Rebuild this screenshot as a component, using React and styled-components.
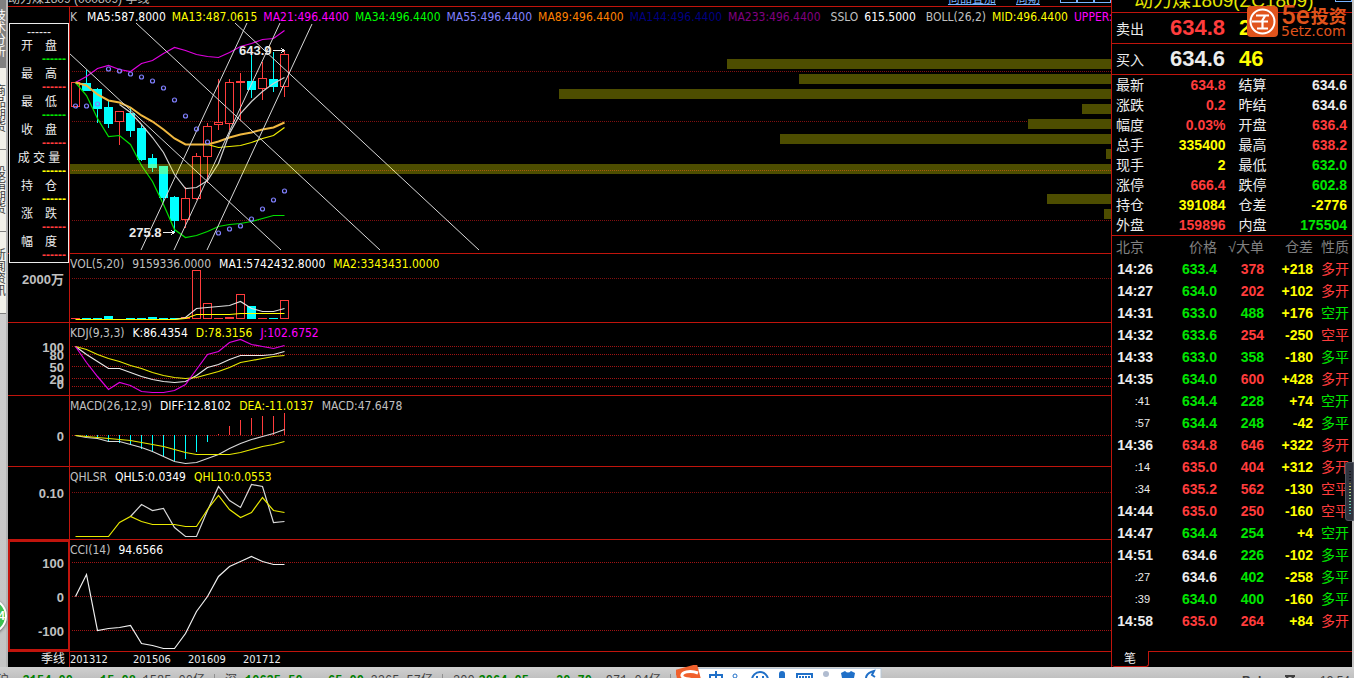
import React, { useState } from 'react';
import styled, { createGlobalStyle } from 'styled-components';

const RED = '#c0140c';
const UP = '#ff3c3c';
const DOWN = '#00e600';
const CYAN = '#00ffff';
const YELLOW = '#ffff00';
const WHITE = '#ececec';
const MAGENTA = '#ff00ff';
const GREY = '#c0c0c0';

const GlobalStyle = createGlobalStyle`
  * {
    box-sizing: border-box;
  }
  body {
    margin: 0;
    background: #c4c4c4;
    font-family: 'Liberation Sans', 'Noto Sans CJK SC', sans-serif;
  }
  button {
    font: inherit;
    padding: 0;
    margin: 0;
  }
`;

const Page = styled.div`
  display: flex;
  flex-direction: column;
  height: 100vh;
  overflow: hidden;
  position: relative;
`;

const Main = styled.div`
  display: flex;
  flex: 1 0 auto;
  padding-right: 2px;
`;

const SideTabs = styled.nav`
  width: 8px;
  overflow: hidden;
  background: linear-gradient(#d8d8d8, #c4c4c4);
  border-right: 2px solid #b4b4b4;
  flex: none;
`;

const SideTab = styled.button`
  display: flex;
  align-items: center;
  justify-content: flex-end;
  width: 100%;
  height: ${(props) => (props.$active ? 68 : 82)}px;
  border: none;
  border-bottom: 1px solid #808080;
  background: ${(props) => (props.$active ? '#808080' : '#f2f1ea')};
  color: ${(props) => (props.$active ? '#fff' : '#404040')};
  font-size: 12px;
  line-height: 12px;
`;

const SideText = styled.span`
  width: 12px;
  flex: none;
  word-break: break-all;
`;

const Charts = styled.div`
  position: relative;
  display: flex;
  flex-direction: column;
  flex: 1;
  min-width: 0;
  background: #000;
`;

const TitleBar = styled.div`
  display: flex;
  align-items: flex-end;
  justify-content: space-between;
  height: 7px;
  overflow: hidden;
  border-bottom: 1px solid ${RED};
  color: ${GREY};
  font-size: 12px;
  line-height: 14px;
  white-space: nowrap;
`;

const TitleTools = styled.div`
  display: flex;
  align-items: flex-end;
`;

const ToolLink = styled.a`
  color: #78b4ff;
  margin-right: 20px;
`;

const ToolButton = styled.button`
  width: 17px;
  height: 14px;
  margin-bottom: ${(props) => (props.$raised ? 10 : 3)}px;
  background: #000;
  border: 1px solid #78b4ff;
`;

const Panel = styled.section`
  display: flex;
  height: ${(props) => props.$height}px;
  border-bottom: 1px solid ${RED};
`;

const Axis = styled.div`
  width: 62px;
  flex: none;
  border-right: 1px solid ${RED};
  outline: ${(props) => (props.$selected ? `2px solid ${RED}` : 'none')};
  outline-offset: -2px;
`;

const Plot = styled.div`
  flex: 1;
  min-width: 0;
  overflow: hidden;
`;

const Legend = styled.div`
  display: flex;
  gap: ${(props) => (props.$dense ? 6 : 8)}px;
  height: 20px;
  line-height: 20px;
  font-family: 'DejaVu Sans Condensed', 'DejaVu Sans', sans-serif;
  font-size: 12px;
  white-space: nowrap;
`;

const LegendItem = styled.span`
  color: ${(props) => props.color};
  padding-right: ${(props) => (props.$wide ? 4 : 0)}px;
`;

const Canvas = styled.svg`
  display: block;
  width: 100%;
  height: ${(props) => props.$height}px;
  overflow: visible;
  shape-rendering: crispEdges;
`;

const AxisText = styled.text`
  fill: ${GREY};
  font-family: 'Liberation Sans', 'Noto Sans CJK SC', sans-serif;
  font-size: 13px;
  font-weight: bold;
  text-anchor: end;
`;

const Mark = styled.text`
  fill: ${WHITE};
  font-family: 'Liberation Sans', sans-serif;
  font-size: 13px;
  font-weight: bold;
`;

const DateRow = styled.div`
  display: flex;
  flex: 1;
  font-family: 'DejaVu Sans Condensed', 'Noto Sans CJK SC', sans-serif;
  font-size: 11px;
  line-height: 15px;
  color: ${WHITE};
`;

const Period = styled.div`
  width: 62px;
  flex: none;
  padding-right: 4px;
  text-align: right;
  font-size: 12px;
  border-right: 1px solid ${RED};
`;

const DateCell = styled.div`
  width: ${(props) => props.$width}px;
`;

const InfoBox = styled.div`
  position: absolute;
  left: 1px;
  top: 23px;
  width: 60px;
  height: 240px;
  background: #000;
  border: 1px solid ${WHITE};
  color: ${WHITE};
  font-size: 12px;
  text-align: center;
`;

const InfoHead = styled.div`
  height: 12px;
  line-height: 16px;
`;

const InfoLabel = styled.div`
  height: 18px;
  line-height: 20px;
`;

const InfoValue = styled.div`
  height: 10px;
  line-height: 10px;
  padding-right: 2px;
  text-align: right;
  font-weight: bold;
  color: ${(props) => props.color};
`;

const Quote = styled.aside`
  display: flex;
  flex-direction: column;
  width: 241px;
  flex: none;
  background: #000;
  border-left: 1px solid ${RED};
  color: ${WHITE};
  font-size: 14px;
`;

const QuoteTitle = styled.div`
  display: flex;
  align-items: flex-end;
  justify-content: space-between;
  height: 13px;
  overflow: hidden;
  border-bottom: 1px solid ${RED};
  padding-left: 22px;
  color: #e6e600;
  font-size: 19px;
  line-height: 22px;
  white-space: nowrap;
`;

const BidRow = styled.div`
  display: grid;
  grid-template-columns: 49px 60px 1fr;
  align-items: center;
  height: 31px;
  padding-left: 4px;
  border-bottom: 1px solid ${RED};
`;

const BidPrice = styled.span`
  color: ${(props) => props.color};
  font-size: 22px;
  font-weight: bold;
  text-align: right;
`;

const BidSize = styled.span`
  color: ${YELLOW};
  font-size: 22px;
  font-weight: bold;
  padding-left: 14px;
`;

const Table = styled.table`
  table-layout: fixed;
  width: 100%;
  border-collapse: collapse;
  border-bottom: ${(props) => (props.$ruled ? `1px solid ${RED}` : 'none')};
`;

const Row = styled.tr`
  height: ${(props) => props.$height}px;
`;

const Head = styled.th`
  width: ${(props) => props.$width}px;
  padding: 0;
  font-weight: normal;
  text-align: ${(props) => props.$align || 'right'};
  padding-left: ${(props) => props.$pad || 0}px;
  line-height: 20px;
  color: ${(props) => (props.$dim ? '#808080' : WHITE)};
  white-space: nowrap;
`;

const Cell = styled.td`
  padding: 0;
  padding-left: ${(props) => props.$pad || 0}px;
  padding-right: ${(props) => props.$end || 0}px;
  font-weight: ${(props) => (props.$plain ? 'normal' : 'bold')};
  font-size: ${(props) => (props.$small ? 11 : 14)}px;
  line-height: 20px;
  text-align: ${(props) => props.$align || 'right'};
  color: ${(props) => props.color};
  white-space: nowrap;
`;

const TabRow = styled.div`
  display: flex;
  height: 16px;
  margin-top: auto;
`;

const TickTab = styled.button`
  width: 37px;
  height: 16px;
  background: #000;
  color: ${WHITE};
  border: 1px solid ${RED};
  border-top: none;
  border-left: none;
  border-radius: 0 0 3px 3px;
  font-size: 12px;
  line-height: 14px;
`;

const TabRule = styled.div`
  flex: 1;
  border-top: 1px solid ${RED};
`;

const Status = styled.footer`
  display: flex;
  align-items: center;
  flex: none;
  height: 28px;
  padding-right: 4px;
  margin-left: -13px;
  background: linear-gradient(#d0d0d0, #a8a8a8);
  font-family: 'Liberation Mono', 'Noto Sans CJK SC', monospace;
  font-size: 12px;
  color: #404040;
  white-space: pre;
`;

const IndexGroup = styled.div`
  display: grid;
  grid-template-columns: 20px 56px 63px 69px;
  width: 228px;
  flex: none;
  padding-left: 10px;
  border-right: 1px solid #909090;
  line-height: 14px;
  text-align: right;
`;

const IndexName = styled.span`
  text-align: left;
`;

const Fall = styled.b`
  color: #008000;
`;

const StatusRight = styled.div`
  display: flex;
  align-items: center;
  gap: 12px;
  margin-left: auto;
  font-family: 'Liberation Sans', sans-serif;
`;

const Watermark = styled.div`
  position: absolute;
  right: 6px;
  top: 6px;
  display: flex;
  gap: 3px;
  color: #e0541c;
`;

const Brand = styled.div`
  width: 67px;
  white-space: nowrap;
`;

const BrandName = styled.div`
  display: flex;
  align-items: center;
  height: 18px;
  font-family: Roboto, 'Noto Sans CJK SC', sans-serif;
  font-size: 18px;
  font-weight: bold;
`;

const BrandBig = styled.span`
  font-size: 26px;
  font-weight: 500;
  margin-right: 1px;
`;

const BrandSite = styled.div`
  font-family: 'DejaVu Sans', sans-serif;
  font-size: 14px;
  line-height: 15px;
`;

const Meter = styled.div`
  position: absolute;
  right: 0;
  top: 462px;
  width: 9px;
  height: 59px;
  padding: 8px 2px 6px 3px;
  background: #30343f;
  border: 1px solid #50545f;
  border-radius: 3px 0 0 3px;
`;

const MeterBars = styled.div`
  height: 100%;
  background: repeating-linear-gradient(transparent 0 1px, #30343f 1px 3px),
    linear-gradient(#15171c 0 28%, #d8c860 30%, #60d0b0 80%, #50b0c0);
`;

const Ball = styled.div`
  position: absolute;
  left: -29px;
  top: 598px;
  width: 36px;
  height: 36px;
  border: 2px solid #fff;
  border-radius: 50%;
  background: #3cc050;
  box-shadow: 0 1px 3px #606060;
  color: #fff;
  font-size: 12px;
  font-weight: bold;
  line-height: 32px;
  text-align: right;
`;

const Ime = styled.div`
  position: absolute;
  left: 676px;
  top: 665px;
`;

// one slot is 11px wide, the first bar stands 5px from the axis
const slot = (i) => 5 + i * 11;

// [bodyTop, bodyBottom, high, low, rising]
const candles = [
  [82, 106, 82, 106, 1],
  [83, 90, 70, 91, 0],
  [89, 108, 88, 123, 0],
  [107, 123, 100, 128, 0],
  [111, 121, 111, 145, 1],
  [113, 130, 108, 137, 0],
  [128, 159, 125, 161, 0],
  [158, 167, 154, 172, 0],
  [166, 197, 166, 202, 0],
  [197, 220, 196, 232, 0],
  [198, 219, 187, 228, 1],
  [156, 198, 153, 200, 1],
  [126, 156, 123, 183, 1],
  [122, 124, 79, 130, 1],
  [82, 123, 79, 130, 1],
  [81, 82, 73, 120, 1],
  [81, 89, 51, 98, 0],
  [78, 88, 62, 100, 1],
  [79, 86, 52, 92, 0],
  [54, 86, 50, 97, 1],
];

const upper = [82, 76, 68, 65, 69, 71, 63, 60, 53, 47, 50, 54, 56, 57, 52, 46, 43, 39, 38, 30];
const middle = [82, 85, 94, 100, 102, 107, 115, 121, 129, 138, 144, 144, 144, 141, 137, 134, 132, 129, 127, 122];
const lower = [82, 95, 118, 136, 135, 144, 165, 181, 204, 229, 237, 235, 231, 226, 224, 223, 221, 218, 215, 215];
const ma13 = [144, 147, 146, 145, 142, 138, 135, 127];
const ma5 = [104, 112, 124, 137, 152, 174, 188, 187, 180, 163, 133, 113, 101, 91, 83, 77];
const sar = [106, 106, 104, 69, 71, 74, 77, 81, 88, 100, 116, 129, 142, 233, 229, 226, 219, 209, 200, 191];

const trends = [
  [-1, 53, 211, 250],
  [66, 23, 310, 250],
  [165, 23, 409, 250],
  [71, 250, 177, 23],
  [104, 250, 210, 23],
  [137, 250, 242, 24],
];

// [top, width]
const profile = [
  [59, 384],
  [74, 312],
  [89, 552],
  [104, 29],
  [119, 83],
  [134, 331],
  [149, 5],
  [194, 64],
  [209, 7],
];

const volumes = [318, 318, 318, 316, 319, 318, 318, 317, 318, 318, 317, 270, 303, 318, 317, 294, 306, 318, 318, 300];
const volMa5 = [319, 319, 319, 319, 319, 319, 317, 308, 307, 306, 305, 301, 308, 311, 311, 308];
const volMa20 = [319, 319, 319, 319, 319, 319, 319, 319, 319, 319, 318, 314, 314, 314, 314, 313, 313, 313, 313, 313];

const kLine = [346, 354, 361, 368, 368, 372, 376, 379, 381, 382, 381, 375, 367, 364, 359, 355, 355, 355, 354, 351];
const dLine = [346, 349, 354, 358, 361, 365, 368, 372, 375, 377, 378, 377, 374, 371, 367, 362, 360, 358, 356, 355];
const jLine = [346, 362, 376, 389, 382, 385, 391, 392, 392, 390, 384, 369, 354, 351, 342, 339, 344, 346, 348, 345];

const bars = [435, 437, 438, 442, 443, 445, 449, 452, 457, 461, 459, 452, 442, 434, 426, 420, 418, 416, 416, 413];
const diff = [435, 437, 438, 441, 441, 444, 447, 451, 456, 461, 463, 462, 458, 454, 448, 443, 439, 436, 433, 429];
const dea = [435, 436, 437, 438, 439, 440, 442, 444, 446, 449, 452, 454, 454, 454, 454, 452, 449, 446, 444, 441];

const qhl5 = [516, 504, 510, 508, 527, 536, 536, 510, 486, 500, 507, 484, 486, 522, 521];
const qhl10 = [536, 536, 536, 536, 522, 516, 521, 524, 524, 524, 526, 526, 509, 495, 509, 517, 512, 497, 510, 512];
const cci = [596, 574, 630, 628, 627, 625, 643, 645, 648, 648, 633, 611, 596, 576, 566, 561, 556, 561, 564, 564];

const mainLegend = [
  ['K', GREY, true],
  ['MA5:587.8000', '#ffffff'],
  ['MA13:487.0615', YELLOW],
  ['MA21:496.4400', MAGENTA],
  ['MA34:496.4400', '#00ff00'],
  ['MA55:496.4400', '#8080ff'],
  ['MA89:496.4400', '#ff8000'],
  ['MA144:496.4400', '#000080'],
  ['MA233:496.4400', '#800080', true],
  ['SSLO', GREY],
  ['615.5000', '#ffffff', true],
  ['BOLL(26,2)', GREY],
  ['MID:496.4400', YELLOW],
  ['UPPER:643.9000', MAGENTA],
];

const infoRows = [
  ['开　盘', DOWN],
  ['最　高', UP],
  ['最　低', DOWN],
  ['收　盘', UP],
  ['成 交 量', YELLOW],
  ['持　仓', YELLOW],
  ['涨　跌', UP],
  ['幅　度', UP],
];

const quotes = [
  ['最新', '634.8', UP, '结算', '634.6', WHITE],
  ['涨跌', '0.2', UP, '昨结', '634.6', WHITE],
  ['幅度', '0.03%', UP, '开盘', '636.4', UP],
  ['总手', '335400', YELLOW, '最高', '638.2', UP],
  ['现手', '2', YELLOW, '最低', '632.0', DOWN],
  ['涨停', '666.4', UP, '跌停', '602.8', DOWN],
  ['持仓', '391084', YELLOW, '仓差', '-2776', YELLOW],
  ['外盘', '159896', UP, '内盘', '175504', DOWN],
];

const ticks = [
  ['14:26', '633.4', DOWN, '378', UP, '+218', '多开'],
  ['14:27', '634.0', DOWN, '202', UP, '+102', '多开'],
  ['14:31', '633.0', DOWN, '488', DOWN, '+176', '空开'],
  ['14:32', '633.6', DOWN, '254', UP, '-250', '空平'],
  ['14:33', '633.0', DOWN, '358', DOWN, '-180', '多平'],
  ['14:35', '634.0', DOWN, '600', UP, '+428', '多开'],
  [':41', '634.4', DOWN, '228', DOWN, '+74', '空开'],
  [':57', '634.4', DOWN, '248', DOWN, '-42', '多平'],
  ['14:36', '634.8', UP, '646', UP, '+322', '多开'],
  [':14', '635.0', UP, '404', UP, '+312', '多开'],
  [':34', '635.2', UP, '562', UP, '-130', '空平'],
  ['14:44', '635.0', UP, '250', UP, '-160', '空平'],
  ['14:47', '634.4', DOWN, '254', DOWN, '+4', '空开'],
  ['14:51', '634.6', WHITE, '226', DOWN, '-102', '多平'],
  [':27', '634.6', WHITE, '402', DOWN, '-258', '多平'],
  [':39', '634.0', DOWN, '400', DOWN, '-160', '多平'],
  ['14:58', '635.0', UP, '264', UP, '+84', '多开'],
];

const indexes = [
  ['沪', '3154.00', '-15.08', '1585.00亿'],
  ['深', '10635.50', '-65.00', '2265.57亿'],
  ['300', '3064.05', '-20.70', '971.04亿'],
];

const sideTabs = ['技术分析', '商品期货', '股指期货', '新闻资讯'];

const Series = ({ values, color, start = 0, width = 1.2 }) => (
  <polyline
    points={values.map((y, i) => `${slot(i + start) + 0.5},${y + 0.5}`).join(' ')}
    fill="none"
    stroke={color}
    strokeWidth={width}
    shapeRendering="auto"
  />
);

const Grid = ({ levels, color }) =>
  levels.map((y) => (
    <line key={y} x1="2" x2="100%" y1={y + 0.5} y2={y + 0.5} stroke={color} strokeDasharray="1 1" />
  ));

const Candle = ({ x, data }) => {
  const [top, bottom, high, low, rising] = data;
  const color = rising ? UP : CYAN;
  return (
    <g stroke={color} fill={rising ? 'none' : color}>
      <path d={`M${x + 0.5} ${high}V${top}M${x + 0.5} ${bottom}V${low}`} />
      <rect x={x - 3.5} y={top + 0.5} width="8" height={bottom - top} />
    </g>
  );
};

const ChartPanel = ({ top, height, legend, labels = [], dense, selected, children }) => (
  <Panel $height={height}>
    <Axis $selected={selected}>
      <Canvas $height={height - 2}>
        {labels.map(([text, y]) => (
          <AxisText key={text} x="56" y={y - top + 5}>
            {text}
          </AxisText>
        ))}
      </Canvas>
    </Axis>
    <Plot>
      <Legend $dense={dense}>
        {legend.map(([text, color, wide]) => (
          <LegendItem key={text} color={color} $wide={wide}>
            {text}
          </LegendItem>
        ))}
      </Legend>
      <Canvas $height={height - 21}>
        <g transform={`translate(0 ${-top - 20})`}>{children}</g>
      </Canvas>
    </Plot>
  </Panel>
);

const ImeBar = () => (
  <svg width="206" height="26" viewBox="0 0 206 26">
    <rect x="8" y="3.5" width="197" height="24" fill="#fff" stroke="#b8c8d8" />
    <path d="M-1 5L21-1L27 22L4 26Z" fill="#f0602c" />
    <path d="M22 8C14 5 5 7 6 11S20 13 20 18" fill="none" stroke="#fff" strokeWidth="3" />
    <g fill="none" stroke="#2070c8" strokeWidth="2">
      <path d="M34 10H46V17H34ZM40 6V22" />
      <circle cx="59" cy="11" r="2" strokeWidth="1" />
      <circle cx="84" cy="15" r="8" />
      <path d="M81 11V15M87 11V15" />
      <path d="M102 13A4 4 0 0 0 110 13" />
      <path d="M121 9H136V20H121Z" />
      <path d="M123 12H135" strokeDasharray="2 1" />
    </g>
    <rect x="103" y="6" width="6" height="10" rx="3" fill="#2070c8" />
    <circle cx="150" cy="9" r="3" fill="#b0bcd0" />
    <path d="M145 18Q150 8 155 18Z" fill="#b0bcd0" />
    <path d="M165 8L169 6Q172 9 175 6L179 8L178 13H175V20H169V13H166Z" fill="#2070c8" />
    <path d="M192 20Q186 9 198 6L196 10L199 12" fill="none" stroke="#2070c8" strokeWidth="2" />
  </svg>
);

const App = () => {
  const [activeTab, setActiveTab] = useState(0);

  return (
    <Page>
      <GlobalStyle />
      <Main>
        <SideTabs>
          {sideTabs.map((name, i) => (
            <SideTab key={name} $active={i === activeTab} onClick={() => setActiveTab(i)}>
              <SideText>{name}</SideText>
            </SideTab>
          ))}
        </SideTabs>

        <Charts>
          <TitleBar>
            <span>动力煤1809 (000809) 季线</span>
            <TitleTools>
              <ToolLink href="#overlay">商品叠加</ToolLink>
              <ToolLink href="#period">周期</ToolLink>
              <ToolButton aria-label="Minimize" />
              <ToolButton aria-label="Restore" />
              <ToolButton aria-label="Close" />
            </TitleTools>
          </TitleBar>

          <ChartPanel top={7} height={247} legend={mainLegend} dense>
            <Grid levels={[71, 121, 170, 220]} color="#801010" />
            {candles.map((data, i) => (
              <Candle key={i} x={slot(i)} data={data} />
            ))}
            <Series values={upper} color="#e000e0" />
            <Series values={lower} color="#00e000" />
            <Series values={ma13} color="#f0f000" start={12} />
            <Series values={middle} color="#f0b840" width={2} />
            <Series values={ma5} color="#d0d0d0" start={4} />
            {trends.map(([x1, y1, x2, y2]) => (
              <line key={x1} x1={x1} y1={y1} x2={x2} y2={y2} stroke="#d8d8d8" shapeRendering="auto" />
            ))}
            {sar.map((y, i) => (
              <circle
                key={i}
                cx={slot(i) + 0.5}
                cy={y}
                r="2"
                fill="none"
                stroke="#8080ff"
                strokeWidth="1.2"
                shapeRendering="auto"
              />
            ))}
            <rect y="164" width="100%" height="10" fill="#ffff00" fillOpacity="0.3" />
            {profile.map(([y, width]) => (
              <rect
                key={y}
                x="100%"
                y={y}
                width={width}
                height="10"
                fill="#4d4d00"
                transform={`translate(${-width} 0)`}
              />
            ))}
            <Mark x="169" y="55">
              643.9
            </Mark>
            <path d="M203 50.5H214M211 48L214 50.5L211 53" fill="none" stroke={WHITE} />
            <Mark x="59" y="237">
              275.8
            </Mark>
            <path d="M93 232.5H104M101 230L104 232.5L101 235" fill="none" stroke={WHITE} />
          </ChartPanel>

          <ChartPanel
            top={254}
            height={69}
            labels={[['2000万', 279]]}
            legend={[
              ['VOL(5,20)', GREY],
              ['9159336.0000', GREY],
              ['MA1:5742432.8000', '#ffffff'],
              ['MA2:3343431.0000', YELLOW],
            ]}
          >
            <Grid levels={[278]} color="#801010" />
            {volumes.map((y, i) => (
              <rect
                key={i}
                x={slot(i) - 3.5}
                y={y + 0.5}
                width="8"
                height={318 - y > 0 ? 318 - y : 0.1}
                stroke={candles[i][4] ? UP : CYAN}
                fill={candles[i][4] ? 'none' : CYAN}
              />
            ))}
            <Series values={volMa5} color="#e0e0e0" start={4} />
            <Series values={volMa20} color="#ffff00" />
          </ChartPanel>

          <ChartPanel
            top={323}
            height={73}
            labels={[['0', 384], ['20', 379], ['50', 367], ['80', 355], ['100', 347]]}
            legend={[
              ['KDJ(9,3,3)', GREY],
              ['K:86.4354', '#ffffff'],
              ['D:78.3156', YELLOW],
              ['J:102.6752', MAGENTA],
            ]}
          >
            <Grid levels={[346, 354, 366, 378, 386]} color="#a01414" />
            <Series values={kLine} color="#e8e8e8" />
            <Series values={dLine} color="#e8e800" />
            <Series values={jLine} color="#e000e0" />
          </ChartPanel>

          <ChartPanel
            top={396}
            height={71}
            labels={[['0', 436]]}
            legend={[
              ['MACD(26,12,9)', GREY],
              ['DIFF:12.8102', '#ffffff'],
              ['DEA:-11.0137', YELLOW],
              ['MACD:47.6478', GREY],
            ]}
          >
            <Grid levels={[435]} color="#a01414" />
            {bars.map((y, i) => (
              <line
                key={i}
                x1={slot(i) + 0.5}
                x2={slot(i) + 0.5}
                y1="435"
                y2={y}
                stroke={y < 435 ? UP : CYAN}
              />
            ))}
            <Series values={diff} color="#d8d8d8" />
            <Series values={dea} color="#e8e800" />
          </ChartPanel>

          <ChartPanel
            top={467}
            height={73}
            labels={[['0.10', 493]]}
            legend={[
              ['QHLSR', GREY],
              ['QHL5:0.0349', '#ffffff'],
              ['QHL10:0.0553', YELLOW],
            ]}
          >
            <Grid levels={[492]} color="#801010" />
            <Series values={qhl5} color="#d8d8d8" start={5} />
            <Series values={qhl10} color="#e8e800" />
          </ChartPanel>

          <ChartPanel
            top={540}
            height={112}
            selected
            labels={[['100', 563], ['0', 597], ['-100', 631]]}
            legend={[
              ['CCI(14)', GREY],
              ['94.6566', '#ffffff'],
            ]}
          >
            <Grid levels={[562, 596, 630]} color="#a01414" />
            <Series values={cci} color="#f0f0f0" />
          </ChartPanel>

          <DateRow>
            <Period>季线</Period>
            <DateCell $width={63}>201312</DateCell>
            <DateCell $width={55}>201506</DateCell>
            <DateCell $width={55}>201609</DateCell>
            <DateCell $width={55}>201712</DateCell>
          </DateRow>

          <InfoBox>
            <InfoHead>------</InfoHead>
            {infoRows.map(([label, color]) => (
              <React.Fragment key={label}>
                <InfoLabel>{label}</InfoLabel>
                <InfoValue color={color}>------</InfoValue>
              </React.Fragment>
            ))}
          </InfoBox>
        </Charts>

        <Quote>
          <QuoteTitle>
            <span>动力煤1809(ZC1809)</span>
            <ToolButton $raised aria-label="Panel menu" />
          </QuoteTitle>
          <BidRow>
            <span>卖出</span>
            <BidPrice color={UP}>634.8</BidPrice>
            <BidSize>2</BidSize>
          </BidRow>
          <BidRow>
            <span>买入</span>
            <BidPrice color={WHITE}>634.6</BidPrice>
            <BidSize>46</BidSize>
          </BidRow>

          <Table $ruled>
            <tbody>
              {quotes.map(([name, value, color, name2, value2, color2]) => (
                <Row key={name} $height={20}>
                  <Head scope="row" $width={43} $align="left" $pad={4}>
                    {name}
                  </Head>
                  <Cell color={color}>{value}</Cell>
                  <Head scope="row" $width={56} $align="left" $pad={13}>
                    {name2}
                  </Head>
                  <Cell color={color2} $end={5}>
                    {value2}
                  </Cell>
                </Row>
              ))}
            </tbody>
          </Table>

          <Table>
            <thead>
              <Row $height={22}>
                <Head $dim $width={41} $align="left" $pad={4}>
                  北京
                </Head>
                <Head $dim $width={64}>价格</Head>
                <Head $dim $width={47}>√大单</Head>
                <Head $dim $width={49}>仓差</Head>
                <Head $dim $width={39} $align="left" $pad={8}>
                  性质
                </Head>
              </Row>
            </thead>
            <tbody>
              {ticks.map(([time, price, priceColor, size, sizeColor, change, kind], i) => (
                <Row key={i} $height={22}>
                  <Cell
                    color={WHITE}
                    $small={time.length < 5}
                    $plain={time.length < 5}
                    $end={time.length < 5 ? 3 : 0}
                  >
                    {time}
                  </Cell>
                  <Cell color={priceColor}>{price}</Cell>
                  <Cell color={sizeColor}>{size}</Cell>
                  <Cell color={YELLOW}>{change}</Cell>
                  <Cell color={sizeColor} $plain $align="left" $pad={8}>
                    {kind}
                  </Cell>
                </Row>
              ))}
            </tbody>
          </Table>

          <TabRow>
            <TickTab>笔</TickTab>
            <TabRule />
          </TabRow>
        </Quote>
      </Main>

      <Status>
        {indexes.map(([name, value, change, amount]) => (
          <IndexGroup key={name}>
            <IndexName>{name}</IndexName>
            <Fall>{value}</Fall>
            <Fall>{change}</Fall>
            <span>{amount}</span>
          </IndexGroup>
        ))}
        <StatusRight>
          <b>Bohe</b>
          <svg width="24" height="14" viewBox="0 0 24 14">
            <path d="M1 2H11M2 2L6 7L10 2M6 7V14" fill="none" stroke="#404040" strokeWidth="2" />
            <path d="M16 8V14M20 4V14" stroke="#404040" strokeWidth="2" />
          </svg>
          <span>19:54</span>
        </StatusRight>
      </Status>

      <Watermark>
        <svg width="31" height="31" viewBox="0 0 31 31">
          <rect width="31" height="31" rx="4" fill="#e0541c" />
          <circle cx="15.5" cy="15.5" r="12" fill="none" stroke="#fff" strokeWidth="2" />
          <path d="M9 9.5H22M18 10L15 15M5 15.5H21M15.5 15V23M10 22.5H21" fill="none" stroke="#fff" strokeWidth="2.2" />
        </svg>
        <Brand>
          <BrandName>
            <BrandBig>5e</BrandBig>投资
          </BrandName>
          <BrandSite>5etz.com</BrandSite>
        </Brand>
      </Watermark>

      <Meter>
        <MeterBars />
      </Meter>
      <Ball>4</Ball>
      <Ime>
        <ImeBar />
      </Ime>
    </Page>
  );
};

export default App;
